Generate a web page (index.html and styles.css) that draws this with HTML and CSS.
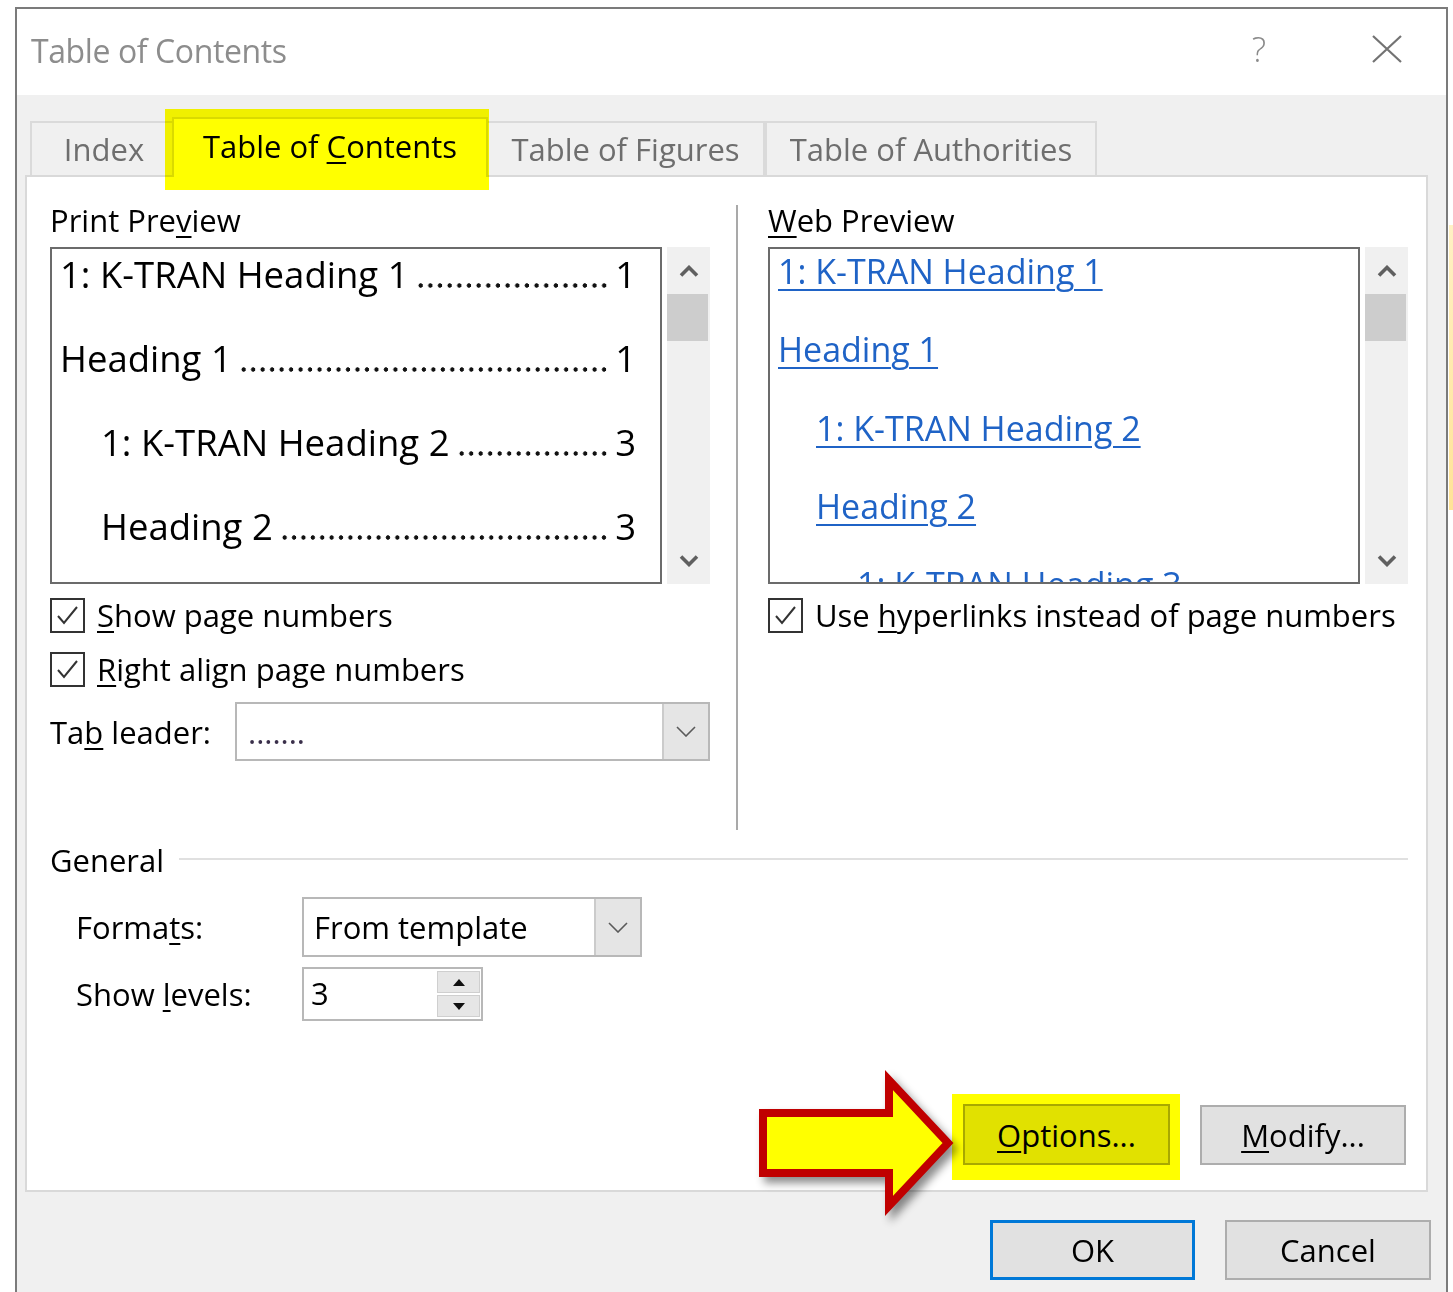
FILE: index.html
```html
<!DOCTYPE html>
<html lang="en">
<head>
<meta charset="utf-8">
<title>Table of Contents</title>
<link rel="stylesheet" href="styles.css">
</head>
<body>
<div class="window">
  <header class="titlebar">
    <span class="title">Table of Contents</span>
    <span class="help">?</span>
    <svg class="close" width="30" height="28" viewBox="0 0 30 28"><path d="M1 1L29 27M29 1L1 27"/></svg>
  </header>

  <div class="client">
    <nav class="tabs">
      <div class="tab tab-index"><span>Index</span></div>
      <div class="tab active"><span>Table of <u>C</u>ontents</span></div>
      <div class="tab tab-figures"><span>Table of Figures</span></div>
      <div class="tab tab-authorities"><span>Table of Authorities</span></div>
    </nav>

    <section class="panel">
      <div class="previews">
        <div class="col col-left">
          <div class="label">Print Pre<u>v</u>iew</div>
          <div class="preview-wrap">
            <div class="preview print">
              <div class="toc-line"><span class="entry">1: K-TRAN Heading 1</span><span class="leader"></span><span class="page">1</span></div>
              <div class="toc-line"><span class="entry">Heading 1</span><span class="leader"></span><span class="page">1</span></div>
              <div class="toc-line l2"><span class="entry">1: K-TRAN Heading 2</span><span class="leader"></span><span class="page">3</span></div>
              <div class="toc-line l2"><span class="entry">Heading 2</span><span class="leader"></span><span class="page">3</span></div>
            </div>
            <div class="scrollbar">
              <div class="sb-btn"><svg width="20" height="12" viewBox="0 0 20 12"><polyline points="2,10.5 10,2.5 18,10.5"/></svg></div>
              <div class="sb-thumb"></div>
              <div class="sb-track"></div>
              <div class="sb-btn"><svg width="20" height="12" viewBox="0 0 20 12"><polyline points="2,1.5 10,9.5 18,1.5"/></svg></div>
            </div>
          </div>
          <div class="check first">
            <span class="box"><svg width="31" height="31" viewBox="0 0 31 31"><polyline points="6,16 12,23 25,7"/></svg></span>
            <span><u>S</u>how page numbers</span>
          </div>
          <div class="check second">
            <span class="box"><svg width="31" height="31" viewBox="0 0 31 31"><polyline points="6,16 12,23 25,7"/></svg></span>
            <span><u>R</u>ight align page numbers</span>
          </div>
          <div class="field leader-field">
            <span class="field-label">Ta<u>b</u> leader:</span>
            <div class="combo combo-leader">
              <span class="combo-value dots">.......</span>
              <span class="combo-btn"><svg width="20" height="11" viewBox="0 0 20 11"><polyline points="1,1 10,10 19,1"/></svg></span>
            </div>
          </div>
        </div>

        <div class="separator"></div>

        <div class="col col-right">
          <div class="label"><u>W</u>eb Preview</div>
          <div class="preview-wrap">
            <div class="preview web">
              <div class="web-line"><a>1: K-TRAN Heading 1</a></div>
              <div class="web-line"><a>Heading 1</a></div>
              <div class="web-line l2"><a>1: K-TRAN Heading 2</a></div>
              <div class="web-line l2"><a>Heading 2</a></div>
              <div class="web-line l3"><a>1: K-TRAN Heading 3</a></div>
            </div>
            <div class="scrollbar">
              <div class="sb-btn"><svg width="20" height="12" viewBox="0 0 20 12"><polyline points="2,10.5 10,2.5 18,10.5"/></svg></div>
              <div class="sb-thumb"></div>
              <div class="sb-track"></div>
              <div class="sb-btn"><svg width="20" height="12" viewBox="0 0 20 12"><polyline points="2,1.5 10,9.5 18,1.5"/></svg></div>
            </div>
          </div>
          <div class="check first">
            <span class="box"><svg width="31" height="31" viewBox="0 0 31 31"><polyline points="6,16 12,23 25,7"/></svg></span>
            <span>Use <u>h</u>yperlinks instead of page numbers</span>
          </div>
        </div>
      </div>

      <div class="group">
        <span class="group-title">General</span>
        <span class="group-rule"></span>
      </div>
      <div class="general">
        <div class="field formats-field">
          <span class="field-label wide">Forma<u>t</u>s:</span>
          <div class="combo combo-formats">
            <span class="combo-value">From template</span>
            <span class="combo-btn"><svg width="20" height="11" viewBox="0 0 20 11"><polyline points="1,1 10,10 19,1"/></svg></span>
          </div>
        </div>
        <div class="field levels-field">
          <span class="field-label wide">Show <u>l</u>evels:</span>
          <div class="spinner">
            <span class="spin-value">3</span>
            <span class="spin-btns">
              <span class="spin-btn"><svg width="12" height="7" viewBox="0 0 12 7"><polygon points="0,7 6,0 12,7"/></svg></span>
              <span class="spin-btn"><svg width="12" height="7" viewBox="0 0 12 7"><polygon points="0,0 12,0 6,7"/></svg></span>
            </span>
          </div>
        </div>
      </div>

      <div class="actions">
        <div class="hl">
          <button class="btn btn-options"><u>O</u>ptions...</button>
          <svg class="pointer" width="215" height="160" viewBox="0 0 215 160"><polygon points="15,49 141,49 141,16 200,79 141,142 141,109 15,109"/></svg>
        </div>
        <button class="btn btn-modify"><u>M</u>odify...</button>
      </div>
    </section>

    <footer class="footer">
      <button class="btn btn-ok">OK</button>
      <button class="btn btn-cancel">Cancel</button>
    </footer>
  </div>
</div>
</body>
</html>
```

FILE: styles.css
```css
* { box-sizing: border-box; }

html, body { margin: 0; }

body {
  height: 1292px;
  overflow: hidden;
  font-family: "Open Sans", "Noto Sans", sans-serif;
  font-size: 31px;
  color: #000;
  /* a sliver of the window behind, peeking out on the right */
  background:
    linear-gradient(#fff1c4, #ffe397) no-repeat right 0 top 225px / 4px 285px,
    #fff;
}

u { text-decoration: underline; text-decoration-thickness: 2px; text-underline-offset: 4px; }

/* ---------- window frame ---------- */
.window {
  margin: 7px 0 0 15px;
  width: 1433px;
  height: 1285px;
  border: 2px solid #7b7b7b;
  border-bottom: 0;
  background: #f0f0f0;
  display: flex;
  flex-direction: column;
}

.titlebar {
  flex: none;
  height: 86px;
  background: #fff;
  display: flex;
  align-items: center;
  padding: 0 44px 0 14px;
}

.title {
  flex: 1;
  font-size: 32px;
  letter-spacing: -0.4px;
  color: #8d8d8d;
  margin-top: -4px;
}

.help {
  font-size: 34px;
  font-weight: 300;
  color: #8a8a8a;
  margin-right: 106px;
  margin-top: -6px;
}

.close { margin-top: -6px; }
.close path { stroke: #737373; stroke-width: 2.2; fill: none; }

.client {
  flex: 1;
  display: flex;
  flex-direction: column;
}

/* ---------- tabs ---------- */
.tabs {
  flex: none;
  height: 80px;
  display: flex;
  align-items: flex-end;
  padding-left: 13px;
}

.tab {
  height: 54px;
  display: flex;
  align-items: center;
  justify-content: center;
  color: #6e6e6e;
  border: 2px solid #dadada;
  border-bottom: 0;
  white-space: nowrap;
}

.tab-index { width: 142px; border-right: 0; padding-left: 4px; }
.tab-figures { width: 277px; border-left: 0; }
.tab-authorities { width: 332px; border-left: 2px solid #dadada; }

.tab.active {
  position: relative;
  width: 316px;
  height: 60px;
  margin-bottom: -2px;
  background: #fff;
  color: #000;
  padding-bottom: 4px;
}

/* marker highlight laid over the selected tab */
.tab.active::after {
  content: "";
  position: absolute;
  left: -9px;
  top: -10px;
  right: -3px;
  bottom: -13px;
  background: #ffff00;
  mix-blend-mode: multiply;
}

/* ---------- tab page ---------- */
.panel {
  flex: none;
  height: 1017px;
  margin: 0 18px 0 8px;
  background: #fff;
  border: 2px solid #d9d9d9;
  padding: 23px 18px 25px 23px;
  display: flex;
  flex-direction: column;
}

.previews {
  height: 630px;
  display: flex;
}

.col { display: flex; flex-direction: column; }
.col-left { width: 660px; }
.col-right { width: 640px; }

.separator {
  width: 2px;
  margin: 5px 30px 0 26px;
  background: #a9a9a9;
}

.label {
  line-height: 40px;
  height: 40px;
  white-space: nowrap;
}

.preview-wrap {
  margin-top: 7px;
  height: 337px;
  display: flex;
  gap: 5px;
}

.preview {
  flex: 1;
  height: 337px;
  border: 2px solid #6b6b6b;
  background: #fff;
  overflow: hidden;
  padding: 1px 24px 0 8px;
}

/* print preview lines with dot leaders */
.toc-line {
  display: flex;
  font-size: 36.5px;
  line-height: 48px;
  height: 48px;
  margin-bottom: 36px;
  white-space: nowrap;
}

.toc-line.l2 { padding-left: 41px; }

.entry { flex: none; }

.leader {
  flex: 1;
  min-width: 0;
  margin: 0 6px 0 7px;
  background-image: radial-gradient(circle at center, #111 1.9px, rgba(0, 0, 0, 0) 2.5px);
  background-size: 9.3px 7px;
  background-repeat: space no-repeat;
  background-position: 0 32px;
}

.page { flex: none; }

/* web preview hyperlinks */
.web-line {
  font-size: 34px;
  line-height: 42px;
  height: 42px;
  margin-bottom: 36.3px;
  white-space: nowrap;
}

.web-line a {
  color: #1f63c6;
  text-decoration: underline;
  text-decoration-thickness: 2px;
  text-underline-offset: 5px;
}

.web-line.l2 { padding-left: 38px; }
.web-line.l3 { padding-left: 79px; }

/* scrollbar */
.scrollbar {
  flex: none;
  width: 43px;
  background: #f0f0f0;
  display: flex;
  flex-direction: column;
}

.sb-btn {
  height: 47px;
  display: flex;
  align-items: center;
  justify-content: center;
}

.sb-btn polyline { fill: none; stroke: #606060; stroke-width: 3.6; }

.sb-thumb {
  height: 47px;
  width: 41px;
  background: #cdcdcd;
}

.sb-track { flex: 1; }

/* checkboxes */
.check {
  height: 35px;
  display: flex;
  align-items: center;
  gap: 12px;
  line-height: 35px;
  white-space: nowrap;
}

.check.first { margin-top: 14px; }
.check.second { margin-top: 19px; }

.box {
  flex: none;
  width: 35px;
  height: 35px;
  border: 2px solid #333;
  background: #fff;
  display: flex;
  align-items: center;
  justify-content: center;
}

.box polyline { fill: none; stroke: #333; stroke-width: 2; }

/* labelled fields */
.field {
  display: flex;
  align-items: center;
  white-space: nowrap;
}

.leader-field { margin-top: 15px; }

.field-label { flex: none; width: 185px; }
.field-label.wide { width: 226px; }

.combo {
  display: flex;
  align-items: stretch;
  background: #fff;
  border: 2px solid #b8b8b8;
}

.combo-leader { width: 475px; height: 59px; }
.combo-formats { width: 340px; height: 60px; }

.combo-value {
  flex: 1;
  display: flex;
  align-items: center;
  padding-left: 10px;
}

.combo-value.dots { color: #3a2f4a; padding-left: 11px; }

.combo-btn {
  flex: none;
  width: 46px;
  background: #e5e5e5;
  border-left: 2px solid #cbcbcb;
  display: flex;
  align-items: center;
  justify-content: center;
}

.combo-btn polyline { fill: none; stroke: #5a5a5a; stroke-width: 1.6; }

/* General group */
.group {
  margin-top: 10px;
  height: 40px;
  line-height: 40px;
  display: flex;
  align-items: center;
}

.group-rule {
  flex: 1;
  height: 2px;
  margin-left: 15px;
  margin-top: -3px;
  background: #e0e0e0;
}

.general { padding-left: 26px; }

.formats-field { margin-top: 17px; }
.levels-field { margin-top: 10px; }

.spinner {
  width: 181px;
  height: 54px;
  border: 2px solid #b8b8b8;
  background: #fff;
  display: flex;
  align-items: stretch;
}

.spin-value {
  flex: 1;
  display: flex;
  align-items: center;
  padding-left: 7px;
  margin-top: -2px;
}

.spin-btns {
  flex: none;
  width: 43px;
  margin: 2px 1px 2px 0;
  display: flex;
  flex-direction: column;
  gap: 2px;
}

.spin-btn {
  flex: 1;
  background: #e6e6e6;
  border: 1px solid #cfcfcf;
  display: flex;
  align-items: center;
  justify-content: center;
}

.spin-btn polygon { fill: #111; }

/* buttons */
.btn {
  font: inherit;
  color: #000;
  background: #e1e1e1;
  border: 2px solid #adadad;
  padding: 0;
  margin: 0;
  height: 60px;
}

.actions {
  margin-top: auto;
  display: flex;
  justify-content: flex-end;
  align-items: flex-end;
  gap: 30px;
  margin-right: 2px;
}

.hl { position: relative; display: flex; }

/* marker highlight around the Options button */
.hl::before {
  content: "";
  position: absolute;
  left: -11px;
  top: -10px;
  right: -10px;
  bottom: -15px;
  background: #ffff00;
  mix-blend-mode: multiply;
}

.btn-options { width: 207px; height: 61px; border-color: #a9a9a9; }
.btn-modify { width: 206px; }

.pointer {
  position: absolute;
  left: -215px;
  top: -40px;
  overflow: visible;
  filter: drop-shadow(5px 6px 4px rgba(0, 0, 0, 0.45));
}

.pointer polygon {
  fill: #ffff00;
  stroke: #c00000;
  stroke-width: 8;
  stroke-linejoin: miter;
}

.footer {
  flex: none;
  margin-top: 28px;
  padding-right: 15px;
  display: flex;
  justify-content: flex-end;
  gap: 30px;
}

.btn-ok { width: 205px; border: 3px solid #0078d7; }
.btn-cancel { width: 206px; }
```
